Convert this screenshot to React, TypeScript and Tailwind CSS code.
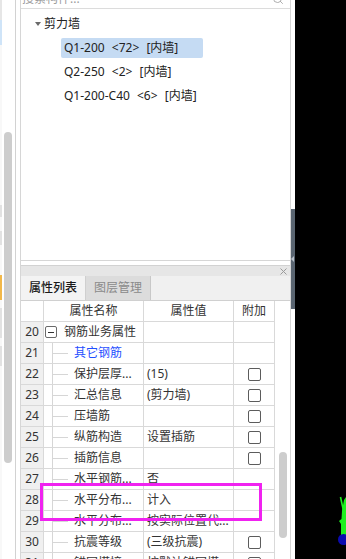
import React from "react";
import { Search } from "lucide-react";

type Row = {
  n: number;
  name: string;
  value?: string;
  check?: boolean;
  group?: boolean;
  blue?: boolean;
};

const rows: Row[] = [
  { n: 20, name: "钢筋业务属性", group: true },
  { n: 21, name: "其它钢筋", blue: true },
  { n: 22, name: "保护层厚...", value: "(15)", check: true },
  { n: 23, name: "汇总信息", value: "(剪力墙)", check: true },
  { n: 24, name: "压墙筋", check: true },
  { n: 25, name: "纵筋构造", value: "设置插筋", check: true },
  { n: 26, name: "插筋信息", check: true },
  { n: 27, name: "水平钢筋...", value: "否" },
  { n: 28, name: "水平分布...", value: "计入" },
  { n: 29, name: "水平分布...", value: "按实际位置代..." },
  { n: 30, name: "抗震等级", value: "(三级抗震)", check: true },
  { n: 31, name: "锚固搭接", value: "按默认锚固搭...", check: true },
];

function Checkbox() {
  return <div className="h-[13px] w-[13px] rounded-[2px] border border-[#5c5c5c] bg-white" />;
}

function TableRow({ r }: { r: Row }) {
  return (
    <div className="flex h-[21px] shrink-0 border-b border-[#d9d9d9]">
      <div className="flex w-[23px] shrink-0 items-center justify-center border-r border-[#d9d9d9] bg-[#f0f0f0] text-[#333]">
        {r.n}
      </div>
      <div className="flex w-[100px] shrink-0 items-center overflow-hidden whitespace-nowrap border-r border-[#d9d9d9]">
        {r.group ? (
          <>
            <div className="ml-[1px] flex h-[12px] w-[12px] shrink-0 items-center justify-center rounded-[2px] border border-[#6a6a6a]">
              <div className="h-px w-[6px] bg-[#333]" />
            </div>
            <span className="ml-[7px] text-[#333]">{r.name}</span>
          </>
        ) : (
          <>
            <div className="w-[8px] shrink-0" />
            <div className="flex w-[16px] shrink-0 items-center self-stretch border-l border-[#d6d6d6]">
              <div className="h-px w-full bg-[#d6d6d6]" />
            </div>
            <span className={"ml-[6px] " + (r.blue ? "text-[#1f4fff]" : "text-[#333]")}>{r.name}</span>
          </>
        )}
      </div>
      <div className="flex w-[90px] shrink-0 items-center overflow-hidden whitespace-nowrap border-r border-[#d9d9d9] pl-[3px] text-[#333]">
        {r.value ?? ""}
      </div>
      <div className="flex w-[41px] shrink-0 items-center justify-center border-r border-[#d9d9d9]">
        {r.check ? <Checkbox /> : null}
      </div>
    </div>
  );
}

export default function App() {
  return (
    <div className="relative flex h-[559px] w-[346px] overflow-hidden bg-white font-['Noto_Sans','Noto_Sans_CJK_SC',sans-serif] text-[12px] text-[#333]">
      {/* left strip */}
      <div className="flex h-full w-[20px] shrink-0 bg-white">
        <div className="flex w-[2px] shrink-0 flex-col">
          <div className="h-[20px] bg-[#e6e6e6]" />
          <div className="h-[25px] bg-[#cfe4f8]" />
          <div className="h-[160px] bg-[#f8f8f8]" />
          <div className="h-[12px] bg-[#e2e2e2]" />
          <div className="h-[14px] bg-[#f8f8f8]" />
          <div className="h-[14px] bg-[#e2e2e2]" />
          <div className="h-[30px] bg-[#f8f8f8]" />
          <div className="h-[25px] bg-[#f2b84a]" />
          <div className="h-[8px] bg-[#f8f8f8]" />
          <div className="h-[30px] bg-[#e2e2e2]" />
          <div className="h-[8px] bg-[#f8f8f8]" />
          <div className="h-[20px] bg-[#e2e2e2]" />
          <div className="flex-1 bg-[#f8f8f8]" />
        </div>
        <div className="flex w-[13px] shrink-0 flex-col pl-[2px]">
          <div className="mt-[132px] h-[331px] w-[8px] rounded-full bg-[#cdcdcd]" />
        </div>
        <div className="w-px shrink-0 bg-[#d2d2d2]" />
        <div className="w-[4px] shrink-0" />
      </div>

      {/* main panel */}
      <div className="flex h-full w-[271px] shrink-0 flex-col border-x border-[#d6d6d6] bg-white">
        {/* search */}
        <div className="h-[9px] shrink-0 overflow-hidden border-b border-[#dcdcdc]">
          <div className="-mt-[11px] flex h-[20px] items-center justify-between pl-[1px] pr-[6px]">
            <span className="text-[#9c9c9c]">搜索构件...</span>
            <Search size={12} strokeWidth={1.6} className="text-[#9a9a9a]" />
          </div>
        </div>

        {/* tree */}
        <div className="h-[252px] shrink-0 border-b border-[#d6d6d6] pt-[3px] text-[#222]">
          <div className="flex h-[24px] items-center pl-[14px]">
            <svg width="6" height="4" viewBox="0 0 6 4" className="shrink-0">
              <path d="M0 0 H6 L3 4 Z" fill="#6a6a6a" />
            </svg>
            <span className="ml-[3px]">剪力墙</span>
          </div>
          <div className="flex h-[24px] items-center pl-[40px]">
            <div className="flex h-[20px] w-[142px] items-center rounded-[2px] bg-[#c5dbf3] pl-[3px] whitespace-nowrap [word-spacing:4px]">
              Q1-200 &lt;72&gt; [内墙]
            </div>
          </div>
          <div className="flex h-[24px] items-center pl-[43px] whitespace-nowrap [word-spacing:4px]">Q2-250 &lt;2&gt; [内墙]</div>
          <div className="flex h-[24px] items-center pl-[43px] whitespace-nowrap [word-spacing:4px]">Q1-200-C40 &lt;6&gt; [内墙]</div>
        </div>

        <div className="h-[4px] shrink-0" />

        {/* panel header bar */}
        <div className="flex h-[11px] shrink-0 items-center justify-end border-t border-[#d2d2d2] bg-[#e6e6e6] pr-[3px]">
          <svg width="7" height="7" viewBox="0 0 7 7">
            <path d="M0.5 0.5 L6.5 6.5 M6.5 0.5 L0.5 6.5" stroke="#9a9a9a" strokeWidth="1" />
          </svg>
        </div>

        {/* tabs */}
        <div className="flex h-[25px] shrink-0 border-b border-[#d0d0d0] bg-[#f0f0f0]">
          <div className="flex w-[65px] items-center justify-center border-r border-[#cfcfcf] bg-[#f3f3f3] font-medium text-[#1a1a1a]">
            属性列表
          </div>
          <div className="flex w-[65px] items-center justify-center border-r border-[#c8c8c8] bg-[#dcdcdc] text-[#8a8a8a]">
            图层管理
          </div>
        </div>

        {/* table + scrollbar */}
        <div className="flex min-h-0 flex-1">
          <div className="flex w-[254px] shrink-0 flex-col">
            <div className="flex h-[21px] shrink-0 border-b border-[#d9d9d9] text-[#333]">
              <div className="w-[23px] shrink-0 border-r border-[#d9d9d9]" />
              <div className="flex w-[100px] shrink-0 items-center justify-center border-r border-[#d9d9d9]">属性名称</div>
              <div className="flex w-[90px] shrink-0 items-center justify-center border-r border-[#d9d9d9]">属性值</div>
              <div className="flex w-[41px] shrink-0 items-center justify-center border-r border-[#d9d9d9]">附加</div>
            </div>
            {rows.map((r) => (
              <TableRow key={r.n} r={r} />
            ))}
          </div>
          <div className="flex w-[15px] shrink-0 flex-col pl-[4px]">
            <div className="mt-[151px] h-[86px] w-[8px] rounded-full bg-[#cdcdcd]" />
          </div>
        </div>
      </div>

      {/* splitter */}
      <div className="flex h-full w-[4px] shrink-0 flex-col bg-white">
        <div className="mt-[209px] flex h-[100px] items-center bg-[#5a6571]">
          <svg width="3" height="6" viewBox="0 0 3 6">
            <path d="M3 0 L0 3 L3 6 Z" fill="#b8c0c8" />
          </svg>
        </div>
      </div>

      {/* black viewport */}
      <div className="h-full flex-1 bg-black">
        <svg width="51" height="559" viewBox="0 0 51 559">
          <path d="M45.5 497 L48.5 511" stroke="#1ef01e" strokeWidth="1.6" />
          <path d="M49 500 L51 497 L51 535 L46 535 L46 524 L44 521 L46.5 519 L47 511 Z" fill="#1ef01e" />
          <circle cx="48.5" cy="539.5" r="5.5" fill="#0b0bb0" />
        </svg>
      </div>

      {/* highlight overlay */}
      <div className="pointer-events-none absolute left-[40px] top-[483px] h-[38px] w-[222px] border-[3px] border-[#f022f0]" />
    </div>
  );
}
